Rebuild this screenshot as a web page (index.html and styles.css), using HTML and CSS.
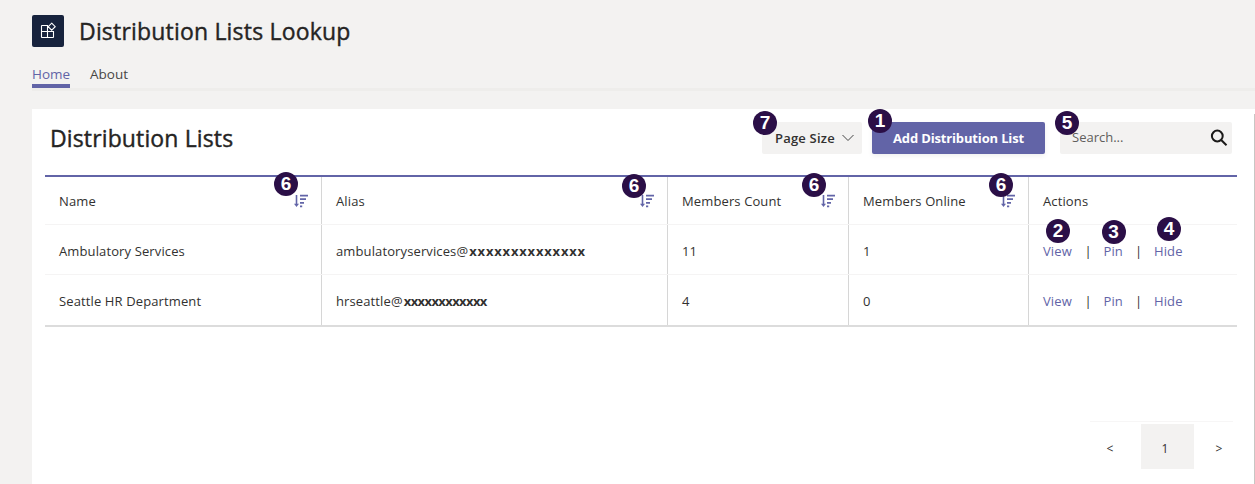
FILE: index.html
```html
<!DOCTYPE html>
<html lang="en">
<head>
<meta charset="utf-8">
<title>Distribution Lists Lookup</title>
<link rel="stylesheet" href="styles.css">
</head>
<body>
<svg class="defs" aria-hidden="true">
  <symbol id="sort" viewBox="0 0 14 14">
    <path d="M2.500 1v10" stroke="currentColor" stroke-width="1.600" fill="none"/>
    <path d="M0 9.800h5L2.500 13z" fill="currentColor"/>
    <path d="M6 1.600h8M6 5.200h6M6 8.900h4M6 12.400h2.200" stroke="currentColor" stroke-width="1.800" fill="none"/>
  </symbol>
</svg>
<header class="app-header">
  <div class="brand">
    <span class="logo">
      <svg width="18" height="18" viewBox="0 0 18 18" fill="none" stroke="#fff" stroke-width="1.100">
        <path d="M9 3.500H3a.5.5 0 0 0-.5.5v11a.5.5 0 0 0 .5.5h11a.5.5 0 0 0 .5-.5V9.500H2.500M8.500 3.500v12M12.700 1.200l3.500 3.500-3.500 3.500-3.500-3.500z"/>
      </svg>
    </span>
    <h1 class="app-title">Distribution Lists Lookup</h1>
  </div>
  <nav class="tabs">
    <a class="tab active">Home</a>
    <a class="tab">About</a>
  </nav>
</header>
<main class="panel">
  <div class="toolbar">
    <h2 class="heading">Distribution Lists</h2>
    <button class="btn page-size"><span>Page Size</span>
      <svg width="12" height="8" viewBox="0 0 12 8" fill="none" stroke="#444" stroke-width="1"><path d="M.5 1 6 6.500 11.500 1"/></svg>
      <b class="badge b7">7</b></button>
    <button class="btn add"><span>Add Distribution List</span><b class="badge b1">1</b></button>
    <div class="search"><span>Search...</span>
      <svg width="18" height="18" viewBox="0 0 18 18" fill="none" stroke="#1b1a19" stroke-width="2"><circle cx="7.300" cy="7" r="5.400"/><path d="m11.200 11 5.300 5.200"/></svg>
      <b class="badge b5">5</b></div>
  </div>
  <div class="table">
    <div class="row head">
      <div class="cell"><span>Name</span><span class="sort"><svg width="14" height="14"><use href="#sort"/></svg><b class="badge s1">6</b></span></div>
      <div class="cell"><span>Alias</span><span class="sort"><svg width="14" height="14"><use href="#sort"/></svg><b class="badge s2">6</b></span></div>
      <div class="cell"><span>Members Count</span><span class="sort"><svg width="14" height="14"><use href="#sort"/></svg><b class="badge s3">6</b></span></div>
      <div class="cell"><span>Members Online</span><span class="sort"><svg width="14" height="14"><use href="#sort"/></svg><b class="badge s4">6</b></span></div>
      <div class="cell"><span>Actions</span></div>
    </div>
    <div class="row">
      <div class="cell">Ambulatory Services</div>
      <div class="cell"><span>ambulatoryservices@</span><b class="mask long">xxxxxxxxxxxxxx</b></div>
      <div class="cell">11</div>
      <div class="cell">1</div>
      <div class="cell actions"><a class="view">View<b class="badge a2">2</b></a><i>|</i><a class="pin">Pin<b class="badge a3">3</b></a><i>|</i><a class="hide">Hide<b class="badge a4">4</b></a></div>
    </div>
    <div class="row">
      <div class="cell">Seattle HR Department</div>
      <div class="cell"><span>hrseattle@</span><b class="mask short">xxxxxxxxxxxx</b></div>
      <div class="cell">4</div>
      <div class="cell">0</div>
      <div class="cell actions"><a class="view">View</a><i>|</i><a class="pin">Pin</a><i>|</i><a class="hide">Hide</a></div>
    </div>
  </div>
  <div class="pager">
    <span class="page prev">&lt;</span><span class="page current">1</span><span class="page next">&gt;</span>
  </div>
  <div class="scrollbar"></div>
</main>
</body>
</html>
```
FILE: styles.css
```css
* { box-sizing: border-box; }
body {
  margin: 0;
  height: 484px;
  overflow: hidden;
  display: flex;
  flex-direction: column;
  background: #f3f2f1;
  color: #323130;
  font: 13px/20px "Open Sans", "Noto Sans", sans-serif;
  letter-spacing: .12px;
  white-space: nowrap;
}
.defs { display: none; }
h1, h2 {
  margin: 0;
  color: #252423;
  font-size: 23px;
  font-weight: 500;
  line-height: 32px;
  -webkit-text-stroke: .4px #252423;
}
svg { display: block; flex: none; }

.app-header { height: 109px; flex: none; padding: 15px 0 0 32px; }
.brand { display: flex; gap: 15px; height: 32px; }
.logo {
  width: 32px; height: 32px;
  display: grid; place-items: center;
  border-radius: 2px;
  background: #17233d;
}
.app-title { letter-spacing: .19px; }
.tabs {
  display: flex; gap: 20px;
  height: 44px; padding-top: 17px;
  border-bottom: 3px solid #eeedeb;
}
.tab { height: 24px; font-size: 13.500px; letter-spacing: 0; color: #484644; }
.tab.active { width: 38px; border-bottom: 4px solid #6264a7; color: #6264a7; }

.panel {
  position: relative;
  flex: 1;
  margin-left: 32px;
  padding: 13px 18px 0 13px;
  background: #fff;
}
.toolbar { display: flex; height: 53px; padding-right: 5px; }
.heading { flex: 1; padding-left: 5px; letter-spacing: .13px; }
.btn {
  position: relative;
  display: flex; align-items: center;
  height: 32px;
  border: 0; border-radius: 2px;
  font: 600 13px/20px "Open Sans", sans-serif;
}
.page-size { width: 100px; padding: 0 8px 0 13px; justify-content: space-between; background: #f3f2f1; color: #323130; letter-spacing: .2px; }
.add { width: 173px; margin: 0 15px 0 10px; justify-content: center; background: #6264a7; color: #fff; font-weight: 700; letter-spacing: -.15px; box-shadow: 0 2px 5px #0001; }
.search {
  position: relative;
  display: flex; align-items: center; justify-content: space-between;
  width: 172px; height: 32px; padding: 0 4px 0 12px;
  border-radius: 2px;
  background: #f3f2f1;
  color: #605e5c;
  letter-spacing: 0;
}
.search span { padding-bottom: 2px; }

.table { border-top: 2px solid #6264a7; border-bottom: 2px solid #dcdcdc; }
.row { display: grid; grid-template-columns: 277px 346px 181px 180px 208px; height: 50px; }
.row + .row { border-top: 1px solid #f5f4f4; }
.row.head { height: 47px; }
.row:last-child { height: 51px; }
.cell { display: flex; align-items: center; padding: 0 13px 0 14px; border-right: 1px solid #d6d6d6; }
.row + .row .cell { padding-top: 2px; }
.cell:last-child { border-right: 0; padding-right: 0; }
.sort { position: relative; margin-left: auto; color: #6264a7; }
.mask { margin-left: 1px; color: #323130; }
.long { letter-spacing: .82px; }
.short { letter-spacing: -.6px; }
.actions a { position: relative; color: #6264a7; }
.actions i { font-style: normal; width: 30.500px; text-align: center; }
.view { width: 30px; }
.pin { width: 20px; }

/* numbered callouts laid over the controls */
.badge {
  position: absolute;
  width: 24px; height: 24px;
  border-radius: 50%;
  background: #2b0f47;
  color: #fff;
  font: 700 19px/24px "Liberation Sans", Arial, sans-serif;
  letter-spacing: 0;
  text-align: center;
}
.b7 { left: -9px; top: -11px; }
.b1 { left: -4px; top: -13px; }
.b5 { left: -5px; top: -11px; }
.s1 { left: -20px; top: -22px; }
.s2 { left: -18px; top: -20px; }
.s3 { left: -19px; top: -21px; }
.s4 { left: -12px; top: -21px; }
.a2 { left: 3px; top: -22px; }
.a3 { left: -2px; top: -21px; }
.a4 { left: 3px; top: -24px; }

.pager {
  display: flex;
  width: 143px;
  margin: 94px 4px 0 auto;
  padding-top: 2px;
  border-top: 1px solid #f7f6f6;
}
.page { height: 45px; line-height: 49px; text-align: center; font-size: 12px; }
.page.prev { width: 51px; padding-right: 11px; }
.page.current { width: 53px; padding-right: 5px; background: #f3f2f1; }
.page.next { width: 39px; padding-left: 11px; }
.scrollbar { position: absolute; right: 0; top: 5px; bottom: 0; width: 1px; background: #c8c6c4; }
```
